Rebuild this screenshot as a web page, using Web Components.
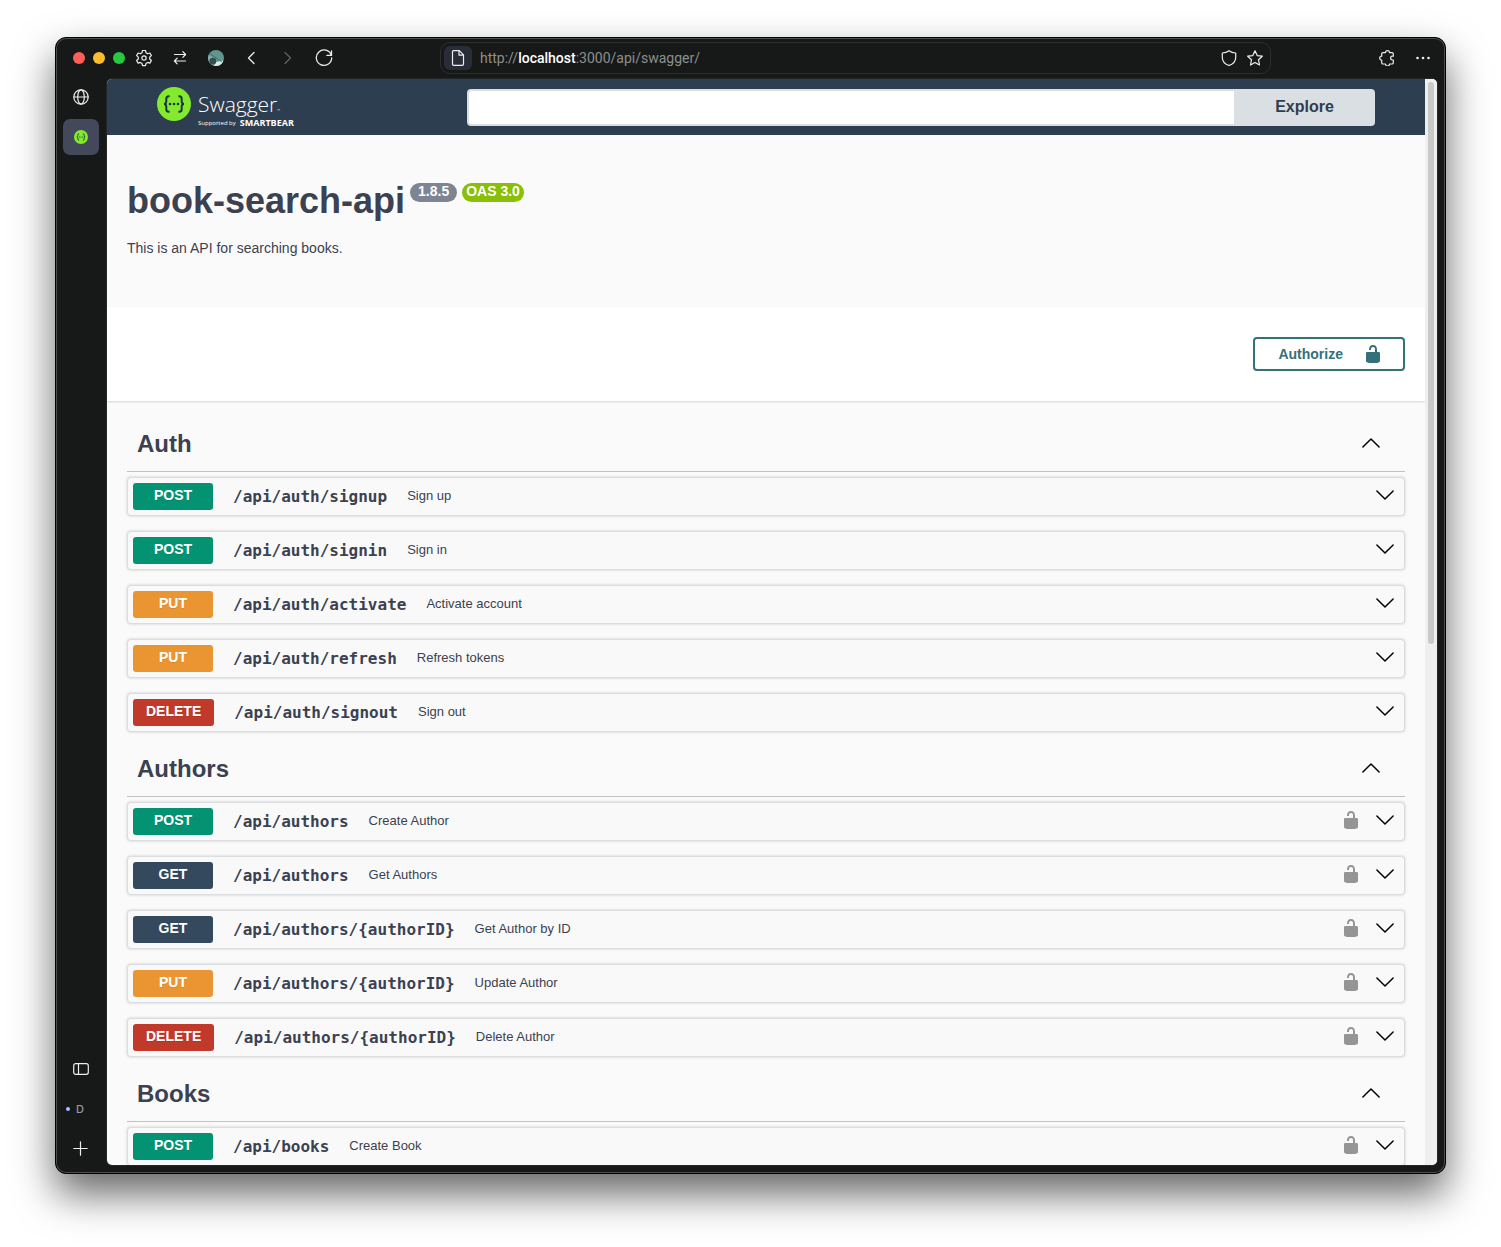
<!DOCTYPE html>
<html lang="en">
<head>
<meta charset="utf-8">
<title>book-search-api</title>
<style>
  html, body { height: 100%; }
  body { margin: 0; background: #fff; font-family: "Liberation Sans", Arial, sans-serif; color: #3b4151; }
  browser-window { --shell: #171918; }
</style>
</head>
<body>
<browser-window>
  <browser-toolbar slot="toolbar"></browser-toolbar>
  <tab-rail slot="rail"></tab-rail>
  <api-topbar></api-topbar>
  <api-info name="book-search-api" version="1.8.5" oas="OAS 3.0">This is an API for searching books.</api-info>
  <auth-bar></auth-bar>
  <api-tags>
    <api-tag name="Auth">
      <api-op method="post" path="/api/auth/signup">Sign up</api-op>
      <api-op method="post" path="/api/auth/signin">Sign in</api-op>
      <api-op method="put" path="/api/auth/activate">Activate account</api-op>
      <api-op method="put" path="/api/auth/refresh">Refresh tokens</api-op>
      <api-op method="delete" path="/api/auth/signout">Sign out</api-op>
    </api-tag>
    <api-tag name="Authors">
      <api-op method="post" path="/api/authors" secured>Create Author</api-op>
      <api-op method="get" path="/api/authors" secured>Get Authors</api-op>
      <api-op method="get" path="/api/authors/{authorID}" secured>Get Author by ID</api-op>
      <api-op method="put" path="/api/authors/{authorID}" secured>Update Author</api-op>
      <api-op method="delete" path="/api/authors/{authorID}" secured>Delete Author</api-op>
    </api-tag>
    <api-tag name="Books">
      <api-op method="post" path="/api/books" secured>Create Book</api-op>
    </api-tag>
  </api-tags>
</browser-window>

<script>
const RESET = `
  :host, *, *::before, *::after { box-sizing: border-box; }
  button { margin: 0; padding: 0; border: 0; background: none; color: inherit; font: inherit; cursor: pointer; }
  svg { display: block; flex: none; }
`;

const line = (size, body, width = 1.3) =>
  `<svg width="${size}" height="${size}" viewBox="0 0 ${size} ${size}" fill="none" stroke="currentColor" stroke-width="${width}" stroke-linecap="round" stroke-linejoin="round" aria-hidden="true">${body}</svg>`;

const lock = size => `<svg width="${size}" height="${size}" viewBox="0 0 20 20" fill="currentColor" aria-hidden="true"><path d="M15.8 8H14V5.6C14 2.703 12.665 1 10 1 7.334 1 6 2.703 6 5.6V6h2v-.801C8 3.754 8.797 3 10 3c1.203 0 2 .754 2 2.199V8H4c-.553 0-1 .646-1 1.199V17c0 .549.428 1.139.951 1.307l1.197.387C5.672 18.861 6.55 19 7.1 19h5.8c.549 0 1.428-.139 1.951-.307l1.196-.387c.524-.167.953-.757.953-1.306V9.199C17 8.646 16.352 8 15.8 8z"/></svg>`;

const braces = size => `<svg width="${size}" height="${size}" viewBox="0 0 34 34" aria-hidden="true">
  <circle cx="17" cy="17" r="17" fill="#85ea2d"/>
  <g fill="none" stroke="#173647" stroke-width="2">
    <path d="M12.600 9.200h-.8c-1.900 0-2.500.8-2.500 2.500v2.600c0 1.700-.6 2.700-2.300 2.700 1.700 0 2.300 1 2.300 2.700v2.600c0 1.700.6 2.500 2.500 2.500h.8"/>
    <path d="M21.400 9.200h.8c1.900 0 2.500.8 2.500 2.500v2.600c0 1.700.6 2.700 2.300 2.700-1.700 0-2.300 1-2.300 2.700v2.600c0 1.700-.6 2.500-2.500 2.500h-.8"/>
  </g>
  <g fill="#173647"><circle cx="13" cy="17" r="1.300"/><circle cx="17" cy="17" r="1.300"/><circle cx="21" cy="17" r="1.300"/></g>
</svg>`;

function define(name, render) {
  customElements.define(name, class extends HTMLElement {
    connectedCallback() {
      if (this.shadowRoot) return;
      const t = document.createElement('template');
      t.innerHTML = render(this);
      this.attachShadow({ mode: 'open' }).append(t.content.cloneNode(true));
    }
  });
}

define('browser-window', () => `<style>${RESET}
  :host { display: flex; height: 100vh; padding: 37px 55px 73px; overflow: hidden; }
  .frame { flex: 1; min-width: 0; display: flex; flex-direction: column; background: var(--shell);
    border: 1px solid #000; border-radius: 11px; box-shadow: inset 0 0 0 1px #4c4e4e, 0 20px 40px rgba(0,0,0,.6); }
  .body { flex: 1; min-height: 0; display: flex; padding: 0 8px 8px 0; }
  .view { flex: 1; min-width: 0; display: flex; background: #fafafa; border-radius: 5px; overflow: hidden; box-shadow: 0 0 0 1px #242727; }
  .page { flex: 1; min-width: 0; overflow: hidden; }
  .track { width: 12px; background: #efefef; padding: 3px; }
  .thumb { height: 52%; border-radius: 3px; background: #c9c9c9; }
</style>
<div class="frame">
  <slot name="toolbar"></slot>
  <div class="body">
    <slot name="rail"></slot>
    <div class="view"><main class="page"><slot></slot></main><div class="track"><div class="thumb"></div></div></div>
  </div>
</div>`);

define('browser-toolbar', () => `<style>${RESET}
  :host { display: flex; align-items: center; height: 41px; padding: 0 4px 2px 17px; color: #eceeee; flex: none; }
  .lights { display: flex; gap: 8px; }
  .lights button { width: 12px; height: 12px; border-radius: 50%; }
  .tools { display: flex; }
  .tools button { width: 36px; height: 32px; display: grid; place-items: center; }
  .tools button:disabled { color: #5e6060; }
  .start { margin-left: 1px; }
  .url { flex: 1; min-width: 0; margin: 0 98px; height: 32px; display: flex; align-items: center; padding: 0 2px 0 3px;
    border: 1px solid #2d2f2f; border-radius: 10px; }
  .doc { width: 28px; height: 24px; border-radius: 6px; background: #2a2d38; display: grid; place-items: center; }
  .addr { flex: 1; margin-left: 8px; font: 14px/20px Roboto, sans-serif; color: #8d8f8f; }
  .addr b { font-weight: 500; color: #fff; }
  .url .mark { width: 26px; height: 24px; display: grid; place-items: center; }
</style>
<div class="lights">
  <button aria-label="Close" style="background:#ff5f57"></button>
  <button aria-label="Minimize" style="background:#febc2e"></button>
  <button aria-label="Zoom" style="background:#28c840"></button>
</div>
<div class="tools start">
  <button aria-label="Settings">${line(18, '<path d="M7.500 1.500h3l.5 2.200 1.700 1 2.200-.7 1.500 2.600-1.700 1.500v1.900l1.700 1.500-1.500 2.600-2.200-.7-1.700 1-.5 2.200h-3l-.5-2.200-1.700-1-2.200.7-1.500-2.600L3.300 10V8.100L1.600 6.600 3.100 4l2.200.7 1.700-1z"/><circle cx="9" cy="9" r="2.200"/>', 1.2)}</button>
  <button aria-label="Swap">${line(16, '<path d="M2.500 4.500h11M10.800 1.700l2.800 2.800-2.800 2.800M13.500 11h-11M5.200 8.200L2.400 11l2.800 2.800"/>', 1.2)}</button>
  <button aria-label="Profile"><svg width="16" height="16" viewBox="0 0 16 16"><defs><clipPath id="c"><circle cx="8" cy="8" r="8"/></clipPath></defs><g clip-path="url(#c)"><path fill="#5f978f" d="M0 0h16v16H0z"/><path fill="#8fa9a9" d="M0 5l4 2 4 4-4 5H0z"/><path fill="#dfe6e6" d="M8 12l7-1.500V16H5z"/><circle cx="4.800" cy="11.200" r="3.400" fill="#344f4f"/><path d="M1 3l13 9" stroke="#3c6664" stroke-width=".8"/></g></svg></button>
  <button aria-label="Back">${line(16, '<path d="M10 2.500L4.500 8l5.500 5.500"/>')}</button>
  <button aria-label="Forward" disabled>${line(16, '<path d="M5 2.500L10.500 8 5 13.500"/>')}</button>
  <button aria-label="Reload">${line(18, '<path d="M16.300 6.200A7.700 7.700 0 1 0 16.700 9M16.500 1.800v4.600h-4.600"/>')}</button>
</div>
<div class="url">
  <button class="doc" aria-label="Site information">${line(16, '<path d="M3.500 .7h5.800l4.200 4.200v9.100a1.300 1.300 0 0 1-1.300 1.300H3.800A1.300 1.300 0 0 1 2.500 14V1.700a1 1 0 0 1 1-1zM9 .9v4.300h4.300"/>', 1.2)}</button>
  <span class="addr">http://<b>localhost</b>:3000/api/swagger/</span>
  <button class="mark" aria-label="Protection">${line(16, '<path d="M8 .7c2 1.500 4 2.100 6.700 2.300v4.500c0 3.600-2.500 6.500-6.700 8-4.200-1.500-6.700-4.400-6.700-8V3C4 2.800 6 2.200 8 .7z"/>', 1.2)}</button>
  <button class="mark" aria-label="Bookmark">${line(16, '<path d="M8 .8l2.200 4.800 5.100.6-3.800 3.500 1 5.300L8 12.400 3.500 15l1-5.300L.7 6.200l5.100-.6z"/>', 1.2)}</button>
</div>
<div class="tools">
  <button aria-label="Extensions">${line(16, '<path d="M4 2.600h2.500a2 2 0 0 1 4 0H13a1.300 1.300 0 0 1 1.300 1.300v2.300h-.8a1.900 1.900 0 0 0 0 3.800h.8v2.700A1.300 1.300 0 0 1 13 14h-2.500a2 2 0 0 1-4 0H4a1.300 1.300 0 0 1-1.300-1.300V10.200a2 2 0 0 1 0-4V3.900A1.300 1.300 0 0 1 4 2.600z"/>', 1.2)}</button>
  <button aria-label="Menu"><svg width="16" height="16" viewBox="0 0 16 16" fill="currentColor"><circle cx="2.500" cy="8" r="1.300"/><circle cx="8" cy="8" r="1.300"/><circle cx="13.500" cy="8" r="1.300"/></svg></button>
</div>`);

define('tab-rail', () => `<style>${RESET}
  :host { display: flex; flex-direction: column; align-items: flex-start; width: 51px; padding-left: 7px; flex: none; color: #eceeee; }
  button { width: 36px; height: 36px; display: grid; place-items: center; border-radius: 7px; flex: none; }
  .on { margin-top: 4px; background: #43485b; }
  .end { margin-top: auto; display: flex; flex-direction: column; gap: 4px; margin-bottom: -2px; }
  .ws { display: flex; justify-content: flex-start; align-items: center; gap: 6px; padding-left: 3px; font: 500 11px/16px Inter, sans-serif; color: #9a9c9c; }
  .ws i { width: 4px; height: 4px; border-radius: 50%; background: #a9c1ff; }
</style>
<button aria-label="Web">${line(16, '<circle cx="8" cy="8" r="7.200"/><ellipse cx="8" cy="8" rx="3.300" ry="7.200"/><path d="M.8 8h14.400"/>', 1.2)}</button>
<button class="on" aria-label="Swagger UI">${braces(14)}</button>
<div class="end">
  <button aria-label="Sidebar">${line(16, '<rect x=".7" y="2.700" width="14.600" height="10.600" rx="2"/><path d="M5.500 2.700v10.600"/>', 1.2)}</button>
  <button class="ws" aria-label="Workspace D"><i></i>D</button>
  <button aria-label="New tab">${line(16, '<path d="M7.500 .8v13.400M.8 7.500h13.400"/>', 1.2)}</button>
</div>`);

define('api-topbar', () => `<style>${RESET}
  :host { display: flex; align-items: flex-start; height: 56px; padding: 8px 50px 0; background: #2d3e50; }
  .logo { display: flex; gap: 7px; width: 310px; flex: none; color: #fff; text-decoration: none; }
  .words { display: flex; flex-direction: column; }
  .name { font: 300 21px/30px "Open Sans", sans-serif; margin-top: 2px; }
  .name small { font-size: 4px; line-height: 0; }
  .by { display: flex; align-items: center; gap: 4px; font: 6px/8px "Open Sans", sans-serif; }
  .by b { font-size: 9px; line-height: 8px; }
  form { flex: 1; display: flex; height: 37px; margin-top: 2px; }
  input { flex: 1; min-width: 0; border: 2px solid #d8dee1; border-right: 0; border-radius: 4px 0 0 4px; padding: 0 10px; background: #fff; outline: 0; }
  form button { width: 141px; padding-bottom: 1px; border-radius: 0 4px 4px 0; background: #d9dfe2; color: #2d3e50; font: bold 16px/20px "Liberation Sans", Arial, sans-serif; }
</style>
<a class="logo" href="#" aria-label="Swagger">${braces(34)}
  <span class="words"><span class="name">Swagger<small>™</small></span><span class="by">Supported by <b>SMARTBEAR</b></span></span></a>
<form onsubmit="return false"><input type="text" aria-label="Definition URL"><button>Explore</button></form>`);

define('api-info', el => `<style>${RESET}
  :host { display: block; padding: 45px 20px 49px; }
  header { display: flex; align-items: flex-start; gap: 5px; }
  h1 { margin: 0; font-size: 36px; line-height: 42px; }
  .pill { margin-top: 3px; height: 19px; padding: 0 8px; border-radius: 10px; background: #7d8492; color: #fff; font: bold 14px/17px "Liberation Sans", Arial, sans-serif; }
  .oas { padding: 0 4px; background: #89bf04; }
  p { margin: 16px 0 0; font-size: 14px; line-height: 20px; }
</style>
<header><h1>${el.getAttribute('name')}</h1><span class="pill">${el.getAttribute('version')}</span><span class="pill oas">${el.getAttribute('oas')}</span></header>
<p><slot></slot></p>`);

define('auth-bar', () => `<style>${RESET}
  :host { display: flex; justify-content: flex-end; padding: 30px 20px; background: #fff; box-shadow: 0 1px 2px rgba(0,0,0,.15); }
  button { display: flex; align-items: center; gap: 20px; height: 34px; padding: 0 20px 0 23px; border: 2px solid #33717b; border-radius: 4px;
    color: #33717b; font: bold 14px/18px "Liberation Sans", Arial, sans-serif; }
</style>
<button>Authorize ${lock(20)}</button>`);

define('api-tags', () => `<style>:host { display: block; padding: 21px 20px 0; }</style><slot></slot>`);

define('api-tag', el => `<style>${RESET}
  :host { display: block; }
  h2 { margin: 0 0 5px; display: flex; align-items: center; height: 50px; padding: 0 24px 6px 10px; border-bottom: 1px solid #bfc1c4; font-size: 24px; line-height: 28px; }
  h2 span { flex: 1; }
  button { color: #000; }
</style>
<h2><span>${el.getAttribute('name')}</span><button aria-label="Collapse ${el.getAttribute('name')}">${line(20, '<path d="M1.900 13L10 5l8.100 8"/>', 1.5)}</button></h2>
<slot></slot>`);

const METHOD_COLOURS = { post: '#049372', put: '#eb9532', delete: '#c0392b', get: '#34495e' };

define('api-op', el => `<style>${RESET}
  :host { display: flex; align-items: center; height: 39px; margin-bottom: 15px; padding: 0 9px 0 5px;
    border: 1px solid #dadee0; border-radius: 4px; background: #f9f9f9; box-shadow: 0 0 3px rgba(0,0,0,.19); }
  .open { flex: 1; min-width: 0; display: flex; align-items: center; gap: 20px; text-align: left; }
  .verb { min-width: 80px; height: 27px; padding: 4px 13px 7px; border-radius: 3px; color: #fff; text-align: center;
    font: bold 14px/16px "Liberation Sans", Arial, sans-serif; text-shadow: 0 1px 0 rgba(0,0,0,.1); }
  .path { font: bold 16px/20px "DejaVu Sans Mono", monospace; }
  .sum { font-size: 13px; line-height: 20px; padding-bottom: 1px; }
  .lock { color: #959595; margin-right: 14px; }
  .more { color: #000; }
  .lock, .more { padding-bottom: 4px; }
</style>
<button class="open"><span class="verb" style="background:${METHOD_COLOURS[el.getAttribute('method')]}">${el.getAttribute('method').toUpperCase()}</span><span class="path">${el.getAttribute('path')}</span><span class="sum"><slot></slot></span></button>
${el.hasAttribute('secured') ? `<button class="lock" aria-label="Authorization">${lock(20)}</button>` : ''}
<button class="more" aria-label="Expand">${line(20, '<path d="M1.900 6L10 14l8.100-8"/>', 1.5)}</button>`);
</script>
</body>
</html>
